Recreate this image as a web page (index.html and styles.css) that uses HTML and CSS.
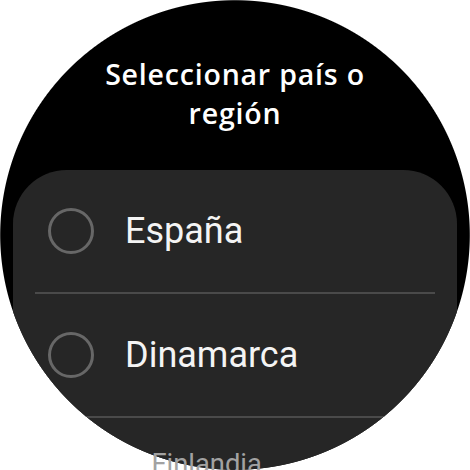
FILE: index.html
```html
<!DOCTYPE html>
<html lang="es">
<head>
<meta charset="utf-8">
<title>Seleccionar país o región</title>
<link rel="stylesheet" href="styles.css">
</head>
<body>
<div class="screen">
  <h1 class="title">Seleccionar país o<br>región</h1>
  <div class="card">
    <div class="row">
      <span class="radio"></span>
      <span class="label">España</span>
    </div>
    <div class="divider"></div>
    <div class="row">
      <span class="radio"></span>
      <span class="label">Dinamarca</span>
    </div>
    <div class="divider"></div>
    <div class="row row-far">
      <span class="radio"></span>
      <span class="label">Finlandia</span>
    </div>
  </div>
</div>
</body>
</html>
```
FILE: styles.css
```css
html, body {
  margin: 0;
  padding: 0;
  width: 470px;
  height: 470px;
  overflow: hidden;
}
body {
  background: radial-gradient(circle 235px at 235px 235px, #000 234.3px, #fff 235.3px);
  font-family: Roboto, "Noto Sans", sans-serif;
}
.screen {
  width: 470px;
  height: 470px;
  padding-top: 55px;
  box-sizing: border-box;
  display: flex;
  flex-direction: column;
  align-items: center;
}
.title {
  margin: 0;
  font-family: "Open Sans", Roboto, sans-serif;
  font-size: 28.5px;
  line-height: 39px;
  font-weight: 600;
  letter-spacing: 0.8px;
  color: #fff;
  text-align: center;
}
.card {
  margin-top: 37px;
  width: 444px;
  flex-shrink: 0;
  border-radius: 54px 54px 0 0;
  background: radial-gradient(circle 235px at 235px 235px, #262626 234.3px, rgba(38,38,38,0) 235.3px) fixed;
  display: flex;
  flex-direction: column;
}
.row {
  height: 122px;
  display: flex;
  align-items: center;
  padding-left: 35px;
  gap: 31px;
  box-sizing: border-box;
}
.radio {
  width: 46px;
  height: 46px;
  box-sizing: border-box;
  border: 3px solid #676767;
  border-radius: 50%;
  flex-shrink: 0;
}
.label {
  font-size: 36px;
  color: #f4f4f4;
  line-height: 1;
}
.divider {
  height: 2px;
  margin: 0 22px;
  background: radial-gradient(circle 235px at 235px 235px, #4a4a4a 234.3px, rgba(74,74,74,0) 235.3px) fixed;
}
.row-far {
  transform: scale(0.76);
  transform-origin: 222px 0;
}
.row-far .label {
  color: #a2a2a2;
}
.row-far .radio {
  opacity: 0;
}
```
